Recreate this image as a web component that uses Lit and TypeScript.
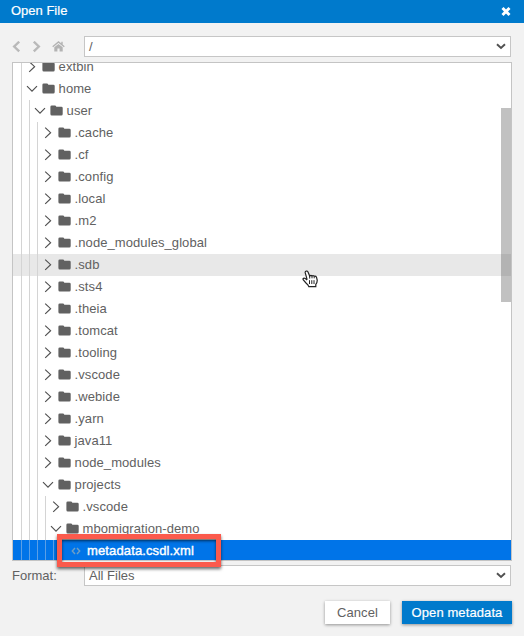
import { LitElement, html, css, svg } from "lit";
import { customElement } from "lit/decorators.js";
import { classMap } from "lit/directives/class-map.js";

interface Node {
  name: string;
  depth: number;
  kind: "open" | "closed" | "file";
  hover?: boolean;
  selected?: boolean;
}

const closed = (name: string, depth: number, hover = false): Node => ({ name, depth, kind: "closed", hover });
const open = (name: string, depth: number): Node => ({ name, depth, kind: "open" });

const NODES: Node[] = [
  closed("extbin", 1),
  open("home", 1),
  open("user", 2),
  closed(".cache", 3),
  closed(".cf", 3),
  closed(".config", 3),
  closed(".local", 3),
  closed(".m2", 3),
  closed(".node_modules_global", 3),
  closed(".sdb", 3, true),
  closed(".sts4", 3),
  closed(".theia", 3),
  closed(".tomcat", 3),
  closed(".tooling", 3),
  closed(".vscode", 3),
  closed(".webide", 3),
  closed(".yarn", 3),
  closed("java11", 3),
  closed("node_modules", 3),
  open("projects", 3),
  closed(".vscode", 4),
  open("mbomigration-demo", 4),
  { name: "metadata.csdl.xml", depth: 5, kind: "file", selected: true },
];

const twistie = (kind: string) => html`<svg class="twistie" width="12" height="12" viewBox="0 0 12 12">
  ${kind === "open"
    ? svg`<path d="M1 3.2 6 8.2 11 3.2" fill="none" stroke="#505050" stroke-width="1.15"/>`
    : svg`<path d="M3.2 .6 8.6 5.7 3.2 10.8" fill="none" stroke="#505050" stroke-width="1.15"/>`}
</svg>`;

const folder = html`<svg class="folder" width="13" height="12" viewBox="0 0 13 12">
  <path d="M1.8.4h3Q6.1.4 6.3 1.7h5q1.4 0 1.4 1.4v5.9q0 1.5-1.4 1.5H1.8Q.4 10.5.4 9V1.8Q.4.4 1.8.4Z" fill="#616161"/>
</svg>`;

const caret = html`<svg width="10" height="7" viewBox="0 0 10 7">
  <path d="M1 1.2 5 5 9 1.2" fill="none" stroke="#505050" stroke-width="1.9"/>
</svg>`;

@customElement("app-root")
export class AppRoot extends LitElement {
  static styles = css`
    :host {
      display: flex;
      flex-direction: column;
      box-sizing: border-box;
      width: 524px;
      height: 636px;
      background: #f2f2f2;
      color: #616161;
      font: 13px/22px "Liberation Sans", Arial, sans-serif;
      overflow: hidden;
    }
    svg { display: block; flex: none; }
    header {
      display: flex;
      align-items: center;
      justify-content: space-between;
      height: 23px;
      padding: 0 13px 0 11px;
      background: #007acc;
      color: #fff;
      -webkit-text-stroke: 0.2px #fff;
    }
    .title { line-height: 20px; margin-bottom: 2px; }
    .bar { display: flex; padding: 13px 13px 0 12px; }
    .nav { display: flex; align-items: center; width: 72px; height: 21px; }
    .nav .next { margin-left: 11px; }
    .nav .home { margin-left: 11px; }
    .select {
      flex: 1;
      display: flex;
      align-items: center;
      justify-content: space-between;
      box-sizing: border-box;
      height: 21px;
      padding: 0 4px;
      border: 1px solid #c6c6c6;
      background: #fff;
    }
    .select span { line-height: 19px; }
    .tree {
      position: relative;
      box-sizing: border-box;
      height: 499px;
      margin: 5px 12px 0;
      border: 1px solid #c4c4c4;
      background: #fff;
    }
    .rows { height: 497px; overflow: hidden; }
    .rows > :first-child { margin-top: -7px; }
    .row { display: flex; align-items: center; height: 22px; padding-left: 8px; }
    .row.hover { background: #e8e8e8; }
    .row.selected { background: #0074e8; color: #fff; }
    .row.selected .label { -webkit-text-stroke: 0.4px #fff; }
    .guide { width: 7px; height: 22px; border-left: 1px solid #d4d4d4; }
    .selected .guide { border-color: #5a9fe6; }
    .twistie { margin-left: -3px; }
    .folder { margin-left: 4px; }
    .label { margin-left: 3.6px; white-space: nowrap; letter-spacing: 0.08px; }
    .file { margin-left: 9.5px; }
    .selected .label { margin-left: 6.5px; letter-spacing: 0.13px; }
    .thumb {
      position: absolute;
      right: 0;
      top: 45px;
      width: 10px;
      height: 194px;
      background: rgba(100, 100, 100, 0.4);
    }
    .pointer { position: absolute; left: 289px; top: 207px; }
    .mark {
      position: absolute;
      left: 44px;
      top: 471px;
      box-sizing: border-box;
      width: 164px;
      height: 33px;
      border: 5px solid #fb5a4c;
      box-shadow: 0 2px 3px rgba(0, 0, 0, 0.6), inset 0 2px 3px rgba(0, 0, 0, 0.6);
    }
    .format { padding-top: 4px; }
    .format .name { width: 72px; line-height: 21px; }
    footer { display: flex; justify-content: flex-end; gap: 12px; padding: 15px 12px 0; }
    button {
      height: 23px;
      padding: 0;
      border: 0;
      font: 13px/23px "Liberation Sans", Arial, sans-serif;
      letter-spacing: 0.1px;
      background: #fff;
      color: #616161;
      box-shadow: 0 1px 3px rgba(0, 0, 0, 0.4);
    }
    .cancel { width: 65px; }
    .primary { width: 110px; background: #007acc; color: #fff; -webkit-text-stroke: 0.2px #fff; }
  `;

  private row(n: Node) {
    return html`<div class=${classMap({ row: true, hover: !!n.hover, selected: !!n.selected })}>
      ${Array.from({ length: n.depth }, () => html`<i class="guide"></i>`)}
      ${n.kind === "file"
        ? html`<svg class="file" width="10" height="8" viewBox="0 0 10 8">
            <path d="M4 1 1.3 4 4 7M6 1 8.7 4 6 7" fill="none" stroke="#6f9fc4" stroke-width="1.4" />
          </svg>`
        : html`${twistie(n.kind)}${folder}`}
      <span class="label">${n.name}</span>
    </div>`;
  }

  render() {
    return html`
      <header>
        <span class="title">Open File</span>
        <svg width="10" height="10" viewBox="0 0 10 10">
          <path d="M1.5 1 8.5 8M8.5 1 1.5 8" stroke="#fff" stroke-width="2.9" />
        </svg>
      </header>
      <div class="bar">
        <div class="nav">
          <svg width="9" height="12" viewBox="0 0 9 12">
            <path d="M7.2.7 2.2 5.5 7.2 10.3" fill="none" stroke="#b9b9b9" stroke-width="2.4" />
          </svg>
          <svg class="next" width="9" height="12" viewBox="0 0 9 12">
            <path d="M1.8.7 6.8 5.5 1.8 10.3" fill="none" stroke="#b9b9b9" stroke-width="2.4" />
          </svg>
          <svg class="home" width="13" height="12" viewBox="0 0 13 12">
            <path d="M.7 5.8 6.5 1 12.3 5.8M10 .8V3.6" fill="none" stroke="#b3b3b3" stroke-width="1.4" />
            <path d="M2.3 6.3 6.5 2.9l4.2 3.4V10.5H7.6V7.5H5.4v3H2.3Z" fill="#b3b3b3" />
          </svg>
        </div>
        <div class="select"><span>/</span>${caret}</div>
      </div>
      <div class="tree">
        <div class="rows">${NODES.map((n) => this.row(n))}</div>
        <div class="thumb"></div>
        <svg class="pointer" width="17" height="18" viewBox="0 0 17 18">
          <path
            d="M4.2 1.1Q5.4.7 6 1.9L7.7 6.1Q8.8 4.9 10 5.9 11.1 5 12.2 6.2 13.8 5.7 14.5 7.2L15.2 10.2Q15.3 12.6 13.8 14.4V16.6H6.8Q6.2 14.8 4.2 13.2L1.3 10Q.4 8.5 2 8.1 3.3 8 4.5 9.6L5 9.2 3.2 2.7Q3 1.5 4.2 1.1Z"
            fill="#fff" stroke="#222" stroke-width="1.2" />
          <path d="M7.7 6V8.6M10 6V8.3M12.2 6.4V8.3M7.5 10.2V14M9.8 10.2V14M12 10.2V14" stroke="#222" stroke-width="1" />
        </svg>
        <div class="mark"></div>
      </div>
      <div class="bar format">
        <span class="name">Format:</span>
        <div class="select"><span>All Files</span>${caret}</div>
      </div>
      <footer>
        <button class="cancel">Cancel</button>
        <button class="primary">Open metadata</button>
      </footer>
    `;
  }
}
